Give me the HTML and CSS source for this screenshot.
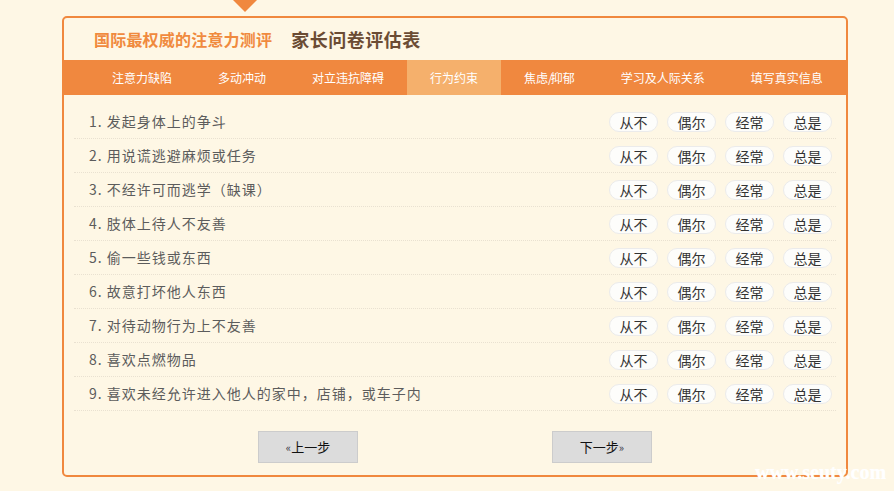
FILE: index.html
```html
<!DOCTYPE html>
<html lang="zh-CN">
<head>
<meta charset="utf-8">
<title>家长问卷评估表</title>
<link rel="stylesheet" href="styles.css">
</head>
<body>
<div class="page">
  <div class="arrow"></div>
  <div class="card">
    <div class="title">
      <span class="title-main">国际最权威的注意力测评</span>
      <span class="title-sub">家长问卷评估表</span>
    </div>
    <div class="tabs">
      <span class="tab">注意力缺陷</span>
      <span class="tab">多动冲动</span>
      <span class="tab">对立违抗障碍</span>
      <span class="tab active">行为约束</span>
      <span class="tab">焦虑<span class="slash">/</span>抑郁</span>
      <span class="tab">学习及人际关系</span>
      <span class="tab">填写真实信息</span>
    </div>
    <div class="list">
      <div class="row"><span class="q">1. 发起身体上的争斗</span><span class="opts"><span class="pill">从不</span><span class="pill">偶尔</span><span class="pill">经常</span><span class="pill">总是</span></span></div>
      <div class="row"><span class="q">2. 用说谎逃避麻烦或任务</span><span class="opts"><span class="pill">从不</span><span class="pill">偶尔</span><span class="pill">经常</span><span class="pill">总是</span></span></div>
      <div class="row"><span class="q">3. 不经许可而逃学（缺课）</span><span class="opts"><span class="pill">从不</span><span class="pill">偶尔</span><span class="pill">经常</span><span class="pill">总是</span></span></div>
      <div class="row"><span class="q">4. 肢体上待人不友善</span><span class="opts"><span class="pill">从不</span><span class="pill">偶尔</span><span class="pill">经常</span><span class="pill">总是</span></span></div>
      <div class="row"><span class="q">5. 偷一些钱或东西</span><span class="opts"><span class="pill">从不</span><span class="pill">偶尔</span><span class="pill">经常</span><span class="pill">总是</span></span></div>
      <div class="row"><span class="q">6. 故意打坏他人东西</span><span class="opts"><span class="pill">从不</span><span class="pill">偶尔</span><span class="pill">经常</span><span class="pill">总是</span></span></div>
      <div class="row"><span class="q">7. 对待动物行为上不友善</span><span class="opts"><span class="pill">从不</span><span class="pill">偶尔</span><span class="pill">经常</span><span class="pill">总是</span></span></div>
      <div class="row"><span class="q">8. 喜欢点燃物品</span><span class="opts"><span class="pill">从不</span><span class="pill">偶尔</span><span class="pill">经常</span><span class="pill">总是</span></span></div>
      <div class="row"><span class="q">9. 喜欢未经允许进入他人的家中，店铺，或车子内</span><span class="opts"><span class="pill">从不</span><span class="pill">偶尔</span><span class="pill">经常</span><span class="pill">总是</span></span></div>
    </div>
    <div class="nav">
      <span class="btn"><span class="chev">«</span>上一步</span>
      <span class="btn">下一步<span class="chev">»</span></span>
    </div>
  </div>
  <div class="watermark">www.seuty.com</div>
</div>
</body>
</html>
```

FILE: styles.css
```css
html, body {
  margin: 0;
  padding: 0;
  background: #fef7e5;
}
body {
  font-family: "Noto Sans CJK SC", "Noto Sans", sans-serif;
  width: 894px;
  height: 491px;
  overflow: hidden;
}
.page {
  position: relative;
  height: 491px;
}
.arrow {
  width: 0;
  height: 0;
  margin-left: 233px;
  border-left: 12px solid transparent;
  border-right: 12px solid transparent;
  border-top: 12px solid #f0883e;
  margin-bottom: 4px;
}
.card {
  margin-left: 62px;
  width: 782px;
  border: 2px solid #f0883e;
  border-radius: 5px;
  background: #fef7e5;
  overflow: hidden;
}
.title {
  height: 42px;
  display: flex;
  align-items: center;
  padding-left: 30px;
  gap: 19px;
}
.title-main {
  font-size: 16px;
  font-weight: bold;
  color: #f08a3e;
  line-height: 20px;
  letter-spacing: 0.2px;
}
.title-sub {
  font-size: 18px;
  font-weight: bold;
  color: #6b4c34;
  line-height: 20px;
  letter-spacing: 0.5px;
}
.tabs {
  height: 35px;
  background: #f0883f;
  display: flex;
  padding-left: 25px;
}
.tab {
  padding: 0 23px;
  line-height: 35px;
  font-size: 12px;
  color: #fff;
  white-space: nowrap;
}
.slash {
  letter-spacing: -2px;
}
.tab.active {
  background: #f5b06c;
}
.list {
  padding: 10px 10px 0;
}
.row {
  height: 33px;
  border-bottom: 1px dotted #e9e1d1;
  display: flex;
  align-items: center;
  justify-content: space-between;
  padding: 0 4px 0 15px;
}
.q {
  font-size: 14px;
  letter-spacing: 1px;
  color: #5c5c5c;
  margin-top: -2px;
}
.opts {
  display: flex;
  gap: 9px;
}
.pill {
  width: 47px;
  height: 18px;
  border: 1px solid #ebebeb;
  border-radius: 10px;
  background: #fdfdfb;
  font-size: 14px;
  line-height: 18px;
  text-align: center;
  color: #333;
}
.nav {
  display: flex;
  justify-content: space-evenly;
  padding: 20px 0 12px;
}
.btn {
  width: 98px;
  height: 30px;
  border: 1px solid #cccccc;
  background: #dcdcdc;
  font-size: 13px;
  line-height: 30px;
  text-align: center;
  color: #111;
}
.chev {
  font-size: 11px;
  color: #334;
}
.watermark {
  position: absolute;
  left: 755px;
  top: 462px;
  font-family: "Liberation Serif", serif;
  font-weight: bold;
  font-size: 20px;
  line-height: 20px;
  color: #ffffff;
  text-shadow: 0 0 1px rgba(255,255,255,0.6);
}
```
